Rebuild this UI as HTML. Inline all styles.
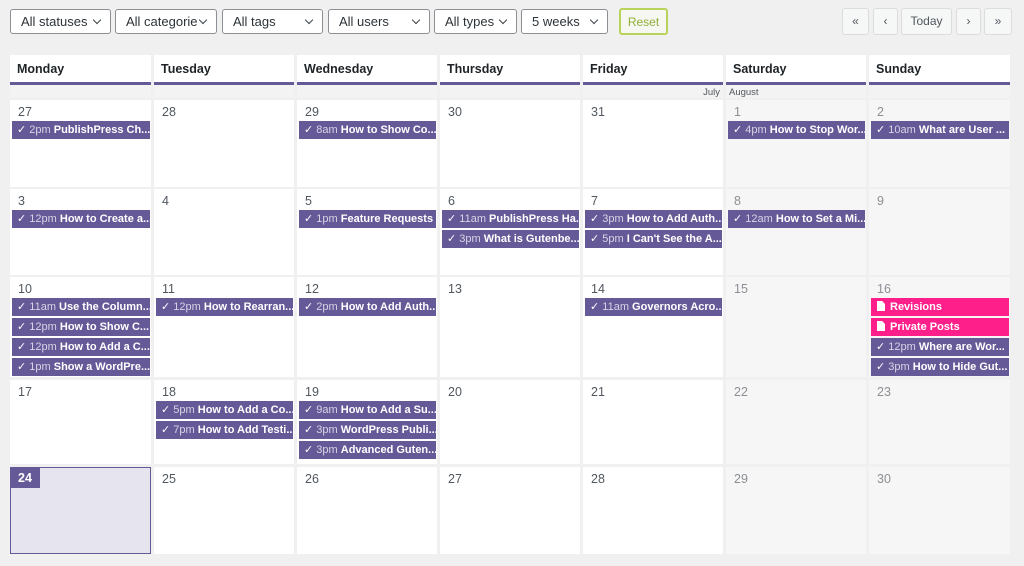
<!DOCTYPE html>
<html><head><meta charset="utf-8"><style>
*{box-sizing:border-box;margin:0;padding:0}
body{width:1024px;height:566px;background:#f0f0f1;font-family:"Liberation Sans",sans-serif;position:relative;overflow:hidden;color:#3c434a}
.sel{position:absolute;top:9px;height:25px;border:1px solid #8c8f94;border-radius:3px;background:#fff;font-size:13px;line-height:23px;padding-left:10px;color:#2c3338}
.sel:after{content:"";position:absolute;right:10px;top:7px;width:5px;height:5px;border-right:1.5px solid #3c434a;border-bottom:1.5px solid #3c434a;transform:rotate(45deg)}
.btn{position:absolute;top:8px;height:27px;border:1.5px solid #dcdcde;border-radius:3px;background:#f6f7f7;font-size:12px;line-height:24px;text-align:center;color:#50575e}
.hd{position:absolute;top:55px;height:30px;background:#fff;border-bottom:3px solid #655997;font-weight:bold;font-size:12.5px;padding:7px 7px;color:#1d2327}
.mo{position:absolute;top:85px;height:13px;background:#f3f3f4;font-size:9.5px;line-height:15px;color:#50575e}
.c{position:absolute;background:#fff}
.c.w{background:#f6f6f7}
.c.w .d{color:#8c8f94}
.d{font-size:12.5px;color:#50575e;padding:5px 0 0 8px;height:21px}
.e{height:18px;background:#655997;color:#fff;font-size:11px;line-height:18px;margin:0 1px 2px 2px;white-space:nowrap;overflow:hidden;padding-left:5px}
.e span{color:#d8d5e6}
.e b{font-weight:bold}
.p{background:#ff1f8b;font-weight:bold;padding-left:6px}
.p i{display:inline-block;width:8px;height:10px;background:#fff;margin-right:5px;vertical-align:-1px;clip-path:polygon(0 0,65% 0,100% 30%,100% 100%,0 100%)}
.today{background:#e6e5ef;border:1px solid #655997}
.today .d{background:#655997;color:#fff;font-weight:bold;display:inline-block;padding:4px 8px 0 8px;height:21px;margin:-1px 0 0 -1px}
</style></head><body>
<div class="sel" style="left:10px;width:101px">All statuses</div>
<div class="sel" style="left:115px;width:102px">All categorie</div>
<div class="sel" style="left:222px;width:101px">All tags</div>
<div class="sel" style="left:328px;width:102px">All users</div>
<div class="sel" style="left:434px;width:83px">All types</div>
<div class="sel" style="left:521px;width:87px">5 weeks</div>
<div class="btn" style="left:619px;width:49px;border:2px solid #b9d35a;color:#8fb03a;background:#f6f7f0">Reset</div>
<div class="btn" style="left:842px;width:27px">«</div>
<div class="btn" style="left:873px;width:25px">‹</div>
<div class="btn" style="left:901px;width:51px">Today</div>
<div class="btn" style="left:956px;width:25px">›</div>
<div class="btn" style="left:984px;width:28px">»</div>
<div id="g"></div>
<script>
var L=[10,154,297,440,583,726,869],W=[141,140,140,140,140,140,141];
var days=["Monday","Tuesday","Wednesday","Thursday","Friday","Saturday","Sunday"];
var h="";
for(var i=0;i<7;i++){h+='<div class="hd" style="left:'+L[i]+'px;width:'+W[i]+'px">'+days[i]+'</div>';
h+='<div class="mo" style="left:'+L[i]+'px;width:'+W[i]+'px;'+(i==4?'text-align:right;padding-right:3px':'padding-left:3px')+'">'+(i==4?'July':i==5?'August':'')+'</div>';}
var T=[100,189,277,380,467],H=[87,86,100,84,87];
var E=function(t,x){return '<div class="e">✓ <span>'+t+'</span> <b>'+x+'</b></div>'};
var P=function(x){return '<div class="e p"><i></i>'+x+'</div>'};
var data=[
[[27,[E("2pm","PublishPress Ch...")]],[28,[]],[29,[E("8am","How to Show Co...")]],[30,[]],[31,[]],[1,[E("4pm","How to Stop Wor...")]],[2,[E("10am","What are User ...")]]],
[[3,[E("12pm","How to Create a...")]],[4,[]],[5,[E("1pm","Feature Requests")]],[6,[E("11am","PublishPress Ha..."),E("3pm","What is Gutenbe...")]],[7,[E("3pm","How to Add Auth..."),E("5pm","I Can't See the A...")]],[8,[E("12am","How to Set a Mi...")]],[9,[]]],
[[10,[E("11am","Use the Column..."),E("12pm","How to Show C..."),E("12pm","How to Add a C..."),E("1pm","Show a WordPre...")]],[11,[E("12pm","How to Rearran...")]],[12,[E("2pm","How to Add Auth...")]],[13,[]],[14,[E("11am","Governors Acro...")]],[15,[]],[16,[P("Revisions"),P("Private Posts"),E("12pm","Where are Wor..."),E("3pm","How to Hide Gut...")]]],
[[17,[]],[18,[E("5pm","How to Add a Co..."),E("7pm","How to Add Testi...")]],[19,[E("9am","How to Add a Su..."),E("3pm","WordPress Publi..."),E("3pm","Advanced Guten...")]],[20,[]],[21,[]],[22,[]],[23,[]]],
[[24,[]],[25,[]],[26,[]],[27,[]],[28,[]],[29,[]],[30,[]]]];
for(var r=0;r<5;r++)for(var i=0;i<7;i++){var c=data[r][i];var cls="c";
if(i>=5)cls="c w";
if(r==4&&i==0)cls="c today";
var st='left:'+L[i]+'px;width:'+W[i]+'px;top:'+T[r]+'px;height:'+H[r]+'px';
h+='<div class="'+cls+'" style="'+st+'"><div class="d">'+c[0]+'</div>'+c[1].join("")+'</div>';}
document.getElementById("g").innerHTML=h;
</script>
</body></html>
